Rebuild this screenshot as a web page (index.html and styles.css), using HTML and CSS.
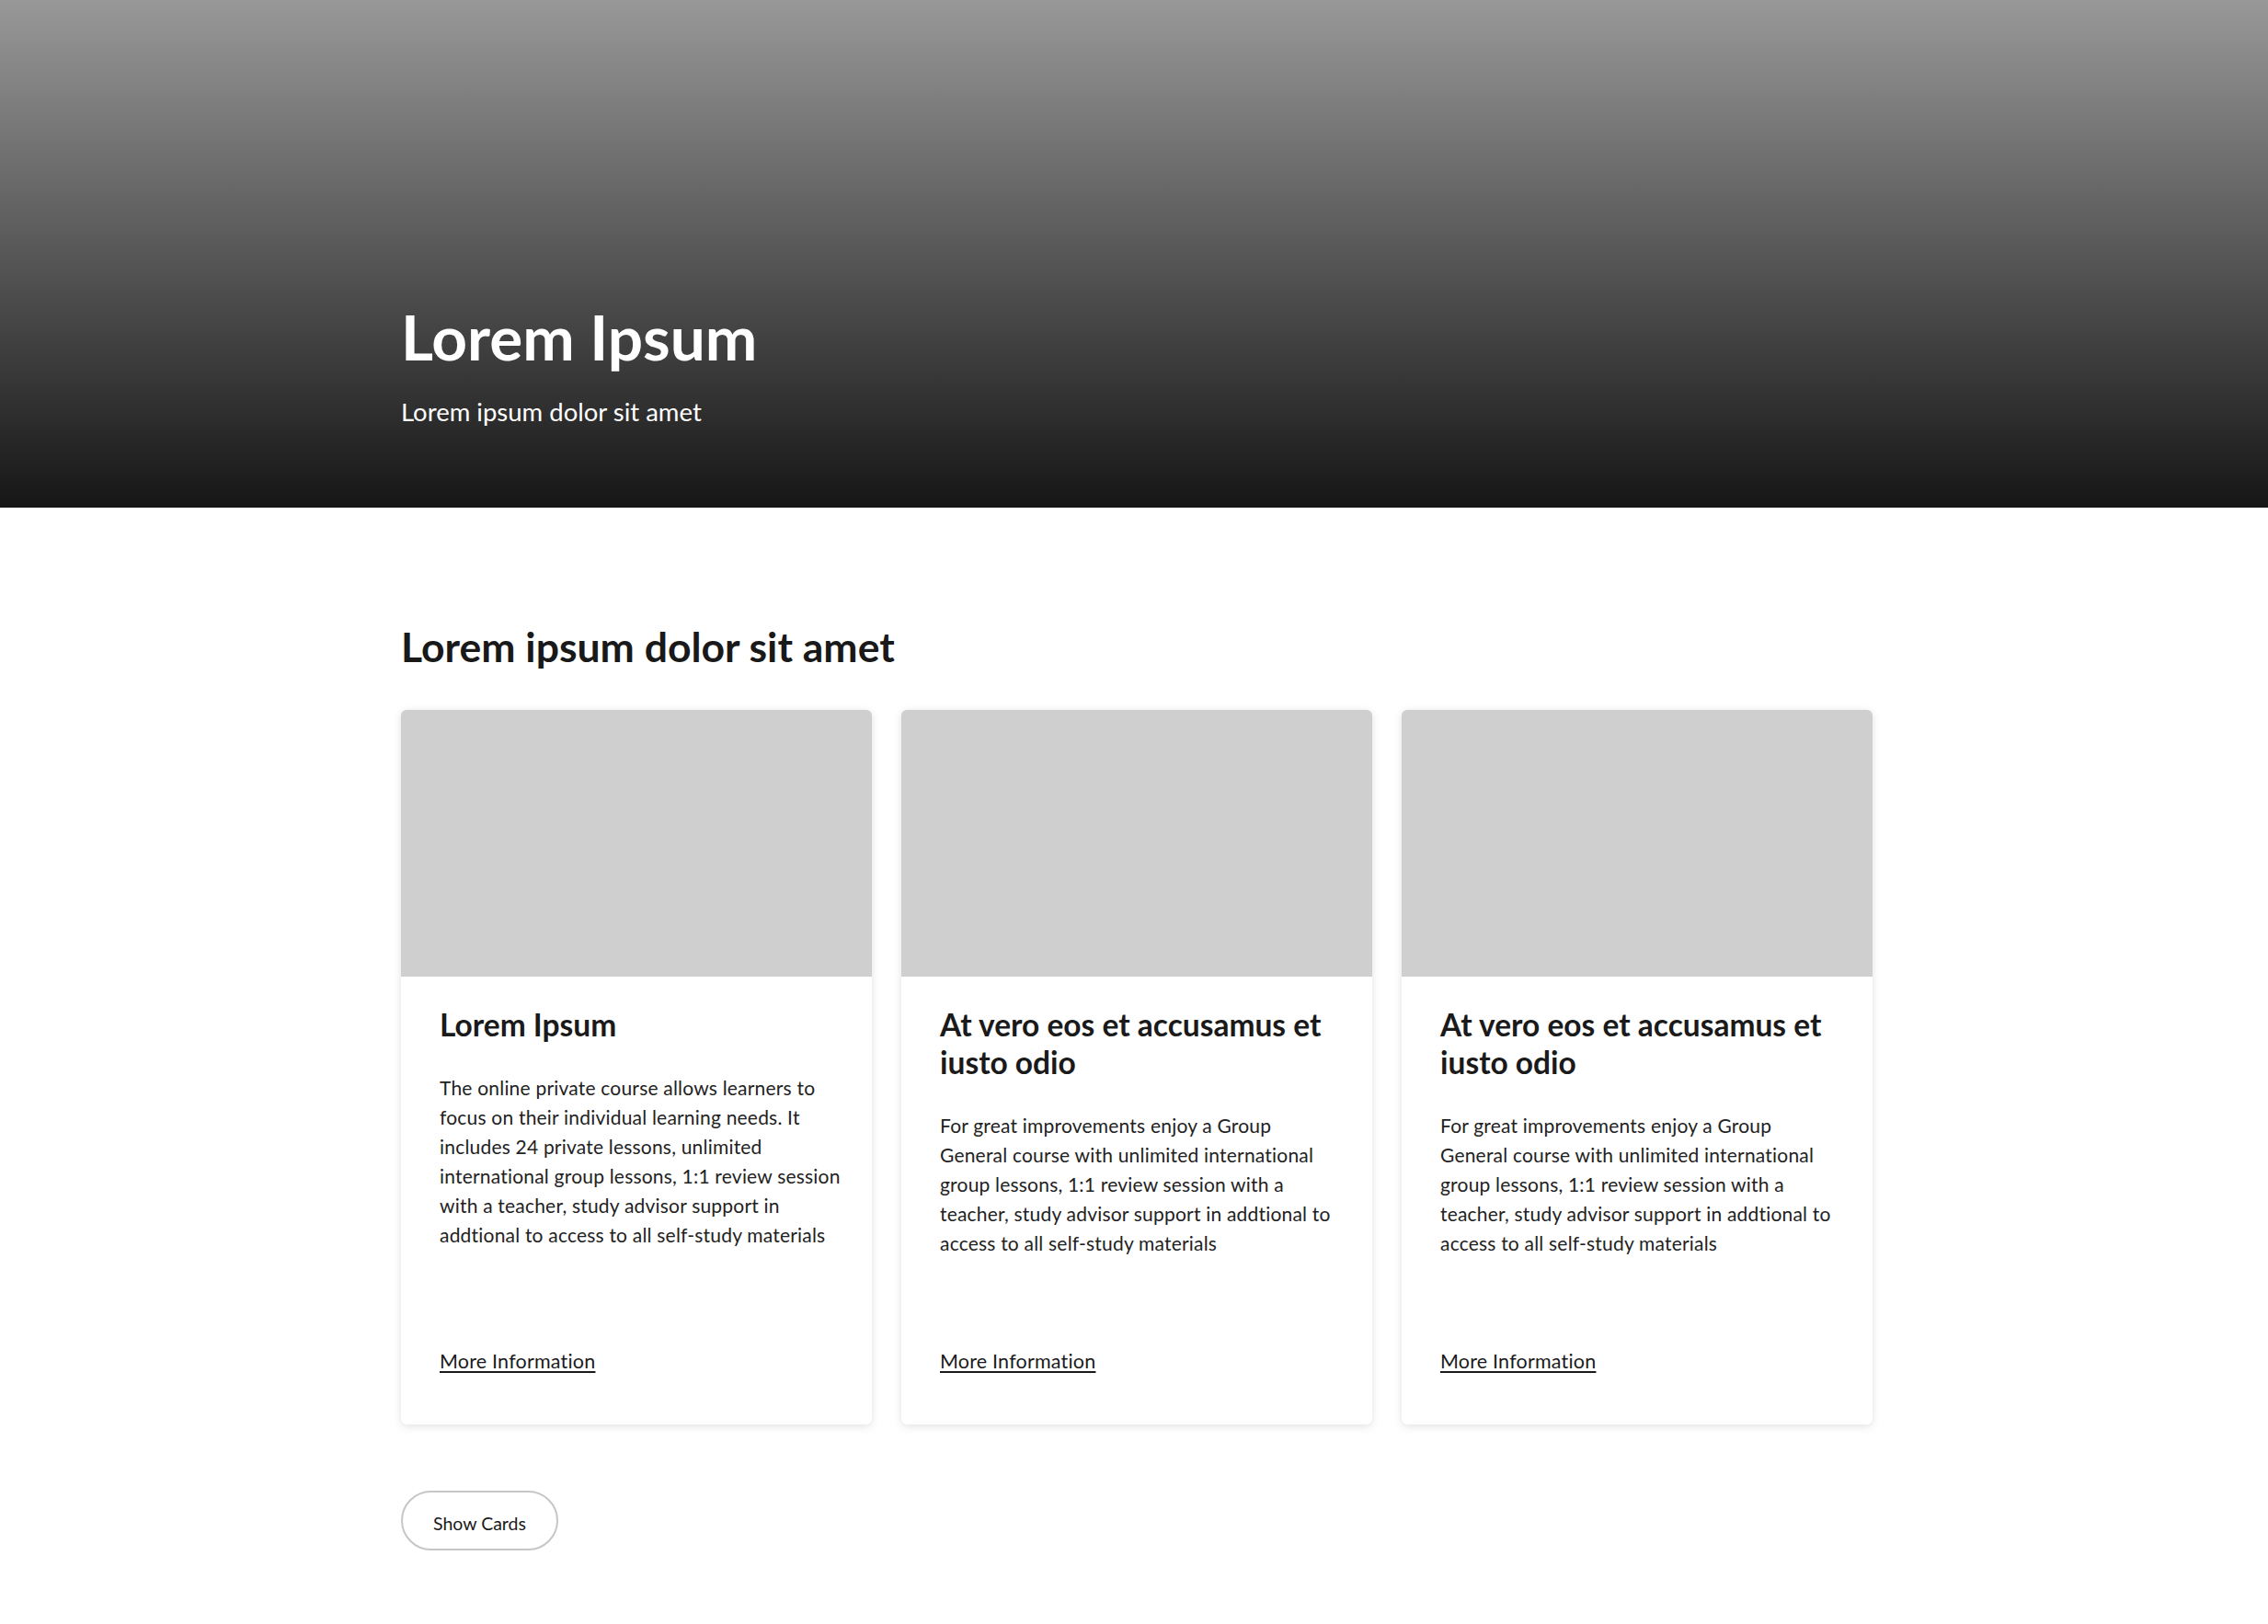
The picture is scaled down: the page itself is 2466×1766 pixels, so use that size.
FILE: index.html
```html
<!DOCTYPE html>
<html lang="en">
<head>
<meta charset="utf-8">
<title>Lorem Ipsum</title>
<link rel="stylesheet" href="styles.css">
</head>
<body>
<header class="hero">
  <div class="container hero-inner">
    <h1 class="hero-title">Lorem Ipsum</h1>
    <p class="hero-sub">Lorem ipsum dolor sit amet</p>
  </div>
</header>
<main class="container main">
  <h2 class="section-title">Lorem ipsum dolor sit amet</h2>
  <div class="cards">
    <article class="card">
      <div class="card-media"></div>
      <div class="card-body">
        <h3 class="card-title">Lorem Ipsum</h3>
        <p class="card-text">The online private course allows learners to focus on their individual learning needs. It includes 24 private lessons, unlimited international group lessons, 1:1 review session with a teacher, study advisor support in addtional to access to all self-study materials</p>
        <a class="card-link" href="#">More Information</a>
      </div>
    </article>
    <article class="card">
      <div class="card-media"></div>
      <div class="card-body">
        <h3 class="card-title">At vero eos et accusamus et iusto odio</h3>
        <p class="card-text">For great improvements enjoy a Group General course with unlimited international group lessons, 1:1 review session with a teacher, study advisor support in addtional to access to all self-study materials</p>
        <a class="card-link" href="#">More Information</a>
      </div>
    </article>
    <article class="card">
      <div class="card-media"></div>
      <div class="card-body">
        <h3 class="card-title">At vero eos et accusamus et iusto odio</h3>
        <p class="card-text">For great improvements enjoy a Group General course with unlimited international group lessons, 1:1 review session with a teacher, study advisor support in addtional to access to all self-study materials</p>
        <a class="card-link" href="#">More Information</a>
      </div>
    </article>
  </div>
  <button class="btn-outline" type="button">Show Cards</button>
</main>
</body>
</html>
```
FILE: styles.css
```css
* { box-sizing: border-box; }
html, body { margin: 0; padding: 0; background: #fff; }
body {
  font-family: "Lato", "Noto Sans", "Liberation Sans", sans-serif;
  color: #1a1a1a;
}
.container {
  width: 1606px;
  padding-left: 6px;
  margin: 0 auto;
}
.hero {
  height: 552px;
  background: linear-gradient(180deg, #989898 0%, #161616 100%);
}
.hero-inner {
  height: 100%;
  display: flex;
  flex-direction: column;
  justify-content: flex-end;
  padding-bottom: 86px;
}
.hero-title {
  margin: 0;
  color: #fff;
  font-size: 67.5px;
  line-height: 77px;
  font-weight: 700;
}
.hero-sub {
  margin: 26px 0 0;
  color: #fff;
  font-size: 27.5px;
  line-height: 36px;
  font-weight: 400;
}
.main {
  padding-top: 126px;
  padding-bottom: 80px;
}
.section-title {
  margin: 0 0 44px;
  font-size: 44.5px;
  line-height: 50px;
  font-weight: 700;
  color: #191919;
}
.cards {
  display: grid;
  grid-template-columns: repeat(3, 1fr);
  gap: 32px;
}
.card {
  background: #fff;
  border-radius: 6px;
  overflow: hidden;
  box-shadow: 0 2px 10px rgba(0, 0, 0, 0.12);
  display: flex;
  flex-direction: column;
}
.card-media {
  height: 290px;
  background: #cfcfcf;
}
.card-body {
  flex: 1;
  display: flex;
  flex-direction: column;
  padding: 32px 33px 53px 42px;
}
.card-title {
  margin: 0;
  font-size: 33.5px;
  line-height: 41px;
  font-weight: 700;
  color: #1a1a1a;
}
.card-text {
  margin: 32px 0 96px;
  font-size: 21px;
  letter-spacing: 0.2px;
  line-height: 32px;
  color: #222;
}
.card-link {
  margin-top: auto;
  font-size: 21.5px;
  letter-spacing: 0.2px;
  line-height: 32px;
  color: #1a1a1a;
  text-decoration: underline;
  text-underline-offset: 3px;
  align-self: flex-start;
}
.btn-outline {
  margin-top: 72px;
  width: 171px;
  height: 65px;
  border: 2px solid #c6c6c6;
  border-radius: 33px;
  background: #fff;
  font-family: inherit;
  font-size: 19.5px;
  color: #1a1a1a;
  padding: 6px 0 0;
  cursor: pointer;
}
```
